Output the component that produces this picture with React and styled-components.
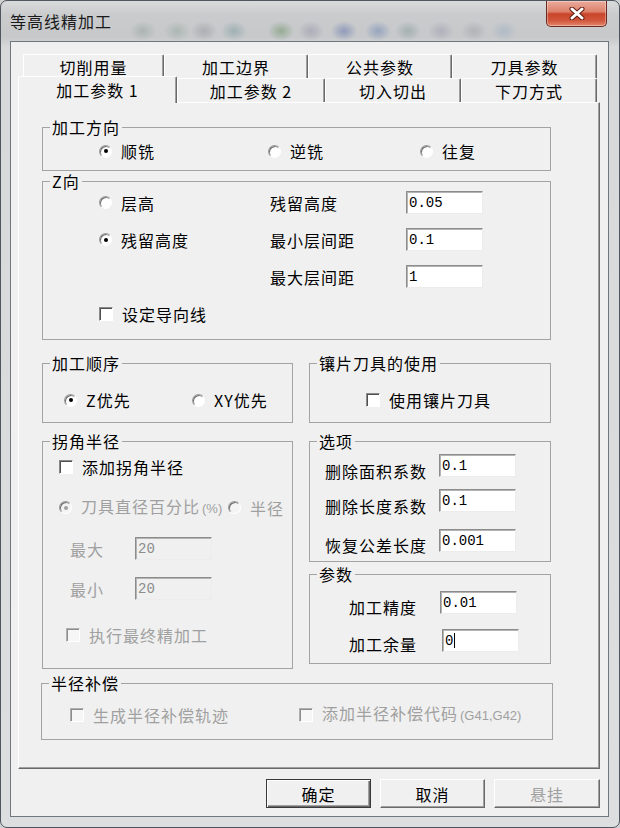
import React from 'react';
import styled, {createGlobalStyle, css} from 'styled-components';

const GlobalStyle = createGlobalStyle`
  html, body {
    margin: 0;
    padding: 0;
  }
  body {
    background: #d0d2d4;
    font-family: "Noto Sans CJK SC", "Noto Sans", sans-serif;
    font-size: 16px;
    color: #000;
  }
`;

// blurred desktop showing through the glass frame
const blob = (x, c) => `radial-gradient(ellipse 13px 10px at ${x}px 30px, ${c}, transparent)`;

const Window = styled.div`
  width: 620px;
  height: 828px;
  box-sizing: border-box;
  display: flex;
  flex-direction: column;
  border: 1px solid #4f565d;
  border-radius: 7px;
  overflow: hidden;
  background:
    ${[
      blob(142, 'rgba(120, 140, 130, 0.35)'),
      blob(176, 'rgba(110, 140, 120, 0.3)'),
      blob(203, 'rgba(120, 125, 135, 0.35)'),
      blob(233, 'rgba(100, 140, 145, 0.4)'),
      blob(280, 'rgba(90, 135, 80, 0.45)'),
      blob(310, 'rgba(125, 120, 150, 0.35)'),
      blob(343, 'rgba(80, 100, 165, 0.45)'),
      blob(377, 'rgba(90, 120, 175, 0.45)'),
      blob(407, 'rgba(100, 130, 130, 0.35)'),
      blob(440, 'rgba(125, 120, 150, 0.3)'),
      blob(473, 'rgba(130, 125, 140, 0.3)'),
      blob(503, 'rgba(130, 160, 190, 0.35)')
    ].join(', ')},
    linear-gradient(#d9dadb, #c9cbcd 14px, #c6c8ca 36px, #d6d8da 46px, #dcdee0);
`;

const TitleBar = styled.div`
  height: 40px;
  display: flex;
  align-items: flex-start;
  padding-left: 9px;
  flex: none;
`;

const Title = styled.div`
  margin-top: 11px;
  font-size: 16px;
  line-height: 18px;
  letter-spacing: 1px;
  color: #1a1a1a;
`;

const CloseButton = styled.div`
  width: 61px;
  height: 26px;
  margin-left: auto;
  margin-right: 12px;
  box-sizing: border-box;
  border: 1px solid #6b2a20;
  border-top: none;
  border-radius: 0 0 5px 5px;
  background: linear-gradient(#eaab9d, #dd826c 42%, #c9452b 52%, #d1573c 78%, #e3866d);
  box-shadow: inset 0 0 0 1px rgba(255, 255, 255, 0.35);
  display: flex;
  align-items: center;
  justify-content: center;
`;

const Client = styled.div`
  flex: 1;
  margin: 0 10px 10px 9px;
  border: 1px solid #6f777f;
  background: #f0f0f0;
  display: flex;
  flex-direction: column;
  padding: 12px 8px 8px 7px;
  min-height: 0;
`;

const TabRow = styled.div`
  display: flex;
  height: 24px;
  padding-left: ${p => p.$inset || 0}px;
  flex: none;
`;

const Tab = styled.div`
  box-sizing: border-box;
  width: ${p => p.$w}px;
  height: 24px;
  display: flex;
  align-items: center;
  justify-content: center;
  background: #f0f0f0;
  border-top: 1px solid #fff;
  border-left: 1px solid #fff;
  border-right: 1px solid #696969;
  box-shadow: inset -1px 0 #a0a0a0;
  border-radius: 2px 2px 0 0;
  font-size: 16px;
  letter-spacing: 1px;
  white-space: nowrap;
  ${p => p.$active && css`
    height: 27px;
    margin-top: -2px;
    margin-bottom: -1px;
    position: relative;
    z-index: 1;
  `}
`;

const Panel = styled.div`
  flex: 1;
  box-sizing: border-box;
  border-top: 1px solid #fff;
  border-left: 1px solid #fff;
  border-right: 1px solid #696969;
  border-bottom: 1px solid #696969;
  box-shadow: inset -1px -1px #a0a0a0;
  padding: 15px 0 0 23px;
`;

const Stack = styled.div`
  width: 509px;
  display: flex;
  flex-direction: column;
`;

// vertical padding lives on the fieldset, horizontal indent on Body
const Group = styled.fieldset`
  margin: ${p => p.$margin || '0'};
  min-width: 0;
  border: 1px solid #a3a3a3;
  padding: ${p => p.$pt}px 0 ${p => p.$pb}px 0;
`;

const Legend = styled.legend`
  padding: 0 2px;
  margin-left: 7px;
  font-size: 16px;
  line-height: 18px;
  letter-spacing: 1px;
`;

const Body = styled.div`
  padding-left: ${p => p.$indent}px;
  display: flex;
  flex-direction: column;
`;

const Columns = styled.div`
  display: grid;
  grid-template-columns: ${p => p.$cols};
  align-items: center;
`;

const ZGrid = styled.div`
  display: grid;
  grid-template-columns: 171px 136px 77px;
  grid-auto-rows: 23px;
  row-gap: 14px;
  align-items: center;
`;

const TwoUp = styled.div`
  display: grid;
  grid-template-columns: 251px 242px;
  column-gap: 16px;
  margin-top: ${p => p.$mt}px;
`;

const RightStack = styled.div`
  display: flex;
  flex-direction: column;
`;

const Line = styled.div`
  display: flex;
  align-items: center;
  margin-top: ${p => p.$mt || 0}px;
  padding-left: ${p => p.$indent || 0}px;
`;

const OptRow = styled.div`
  display: flex;
  align-items: flex-end;
  margin-top: ${p => p.$mt || 0}px;
`;

const FieldLabel = styled.span`
  width: ${p => p.$w}px;
  flex: none;
  line-height: 18px;
  letter-spacing: 1px;
  white-space: nowrap;
  color: ${p => (p.$disabled ? '#a0a0a0' : '#000')};
  margin-bottom: ${p => p.$drop || 0}px;
`;

const OptionBox = styled.label`
  display: flex;
  align-items: center;
  gap: 9px;
  line-height: 18px;
  letter-spacing: 1px;
  white-space: nowrap;
  width: ${p => (p.$w ? `${p.$w}px` : 'auto')};
  flex: none;
  color: ${p => (p.$disabled ? '#a0a0a0' : '#000')};
`;

const RadioMark = styled.span`
  width: 13px;
  height: 13px;
  box-sizing: border-box;
  flex: none;
  border-radius: 50%;
  border: 1px solid;
  border-color: #9a9a9a #fff #fff #9a9a9a;
  box-shadow: inset 1px 1px 0 #707070;
  background: ${p => (p.$disabled ? '#f4f4f4' : '#fff')};
  display: flex;
  align-items: center;
  justify-content: center;
  &::after {
    content: '';
    display: ${p => (p.$checked ? 'block' : 'none')};
    width: 4px;
    height: 4px;
    border-radius: 50%;
    background: ${p => (p.$disabled ? '#a0a0a0' : '#000')};
  }
`;

const CheckMark = styled.span`
  width: 14px;
  height: 14px;
  box-sizing: border-box;
  flex: none;
  border: 1px solid;
  border-color: #8a8a8a #fff #fff #8a8a8a;
  box-shadow: inset 1px 1px 0 #505050;
  background: ${p => (p.$disabled ? '#f6f6f6' : '#fff')};
  ${p => p.$disabled && css`
    border-color: #b0b0b0 #fff #fff #b0b0b0;
    box-shadow: inset 1px 1px 0 #8c8c8c;
  `}
`;

const Small = styled.span`
  font-family: "Liberation Sans", sans-serif;
  font-size: 13px;
  letter-spacing: 0;
  margin-left: 2px;
`;

const Field = styled.div`
  box-sizing: border-box;
  width: 77px;
  height: 23px;
  flex: none;
  display: flex;
  align-items: center;
  padding-left: 2px;
  background: ${p => (p.$disabled ? '#f0f0f0' : '#fff')};
  border: 1px solid;
  border-color: #8c8c8c #ececec #ececec #8c8c8c;
  box-shadow: inset 1px 1px 0 #b4b4b4;
  font-family: "Liberation Mono", monospace;
  font-size: 14px;
  color: ${p => (p.$disabled ? '#8c8c8c' : '#000')};
`;

const Caret = styled.span`
  width: 1px;
  height: 15px;
  background: #000;
  margin-left: 1px;
`;

const ButtonBar = styled.div`
  display: flex;
  justify-content: flex-end;
  gap: 9px;
  margin-top: 10px;
  flex: none;
`;

const Button = styled.div`
  box-sizing: border-box;
  width: ${p => p.$w || 105}px;
  height: 29px;
  display: flex;
  align-items: center;
  justify-content: center;
  background: #f0f0f0;
  border: 1px solid;
  border-color: #fff #696969 #696969 #fff;
  box-shadow: inset -1px -1px #a0a0a0;
  font-size: 16px;
  letter-spacing: 1px;
  color: ${p => (p.$disabled ? '#a0a0a0' : '#000')};
  ${p => p.$default && css`
    border: 1px solid #3a3a3a;
    box-shadow: inset 1px 1px #fff, inset -1px -1px #696969, inset -2px -2px #a0a0a0;
  `}
`;

const Option = ({type = 'radio', checked, disabled, width, children}) =>
  <OptionBox $w={width} $disabled={disabled}>
    {type === 'radio'
      ? <RadioMark $checked={checked} $disabled={disabled} />
      : <CheckMark $disabled={disabled} />}
    <span>{children}</span>
  </OptionBox>;

const CloseGlyph = () =>
  <svg width="16" height="13" viewBox="0 0 16 13">
    <path d="M3 2 L13 11 M13 2 L3 11" stroke="#5e1c12" strokeWidth="5" strokeLinecap="round" />
    <path d="M3 2 L13 11 M13 2 L3 11" stroke="#fff" strokeWidth="3" strokeLinecap="round" />
  </svg>;

const backTabs = [
  {label: '切削用量', w: 141},
  {label: '加工边界', w: 144},
  {label: '公共参数', w: 144},
  {label: '刀具参数', w: 145}
];

const frontTabs = [
  {label: '加工参数 1', w: 159, active: true},
  {label: '加工参数 2', w: 148},
  {label: '切入切出', w: 136},
  {label: '下刀方式', w: 136}
];

export default function App() {
  return (
    <>
      <GlobalStyle />
      <Window>
        <TitleBar>
          <Title>等高线精加工</Title>
          <CloseButton><CloseGlyph /></CloseButton>
        </TitleBar>
        <Client>
          <TabRow $inset={5}>
            {backTabs.map(t => <Tab key={t.label} $w={t.w}>{t.label}</Tab>)}
          </TabRow>
          <TabRow>
            {frontTabs.map(t => <Tab key={t.label} $w={t.w} $active={t.active}>{t.label}</Tab>)}
          </TabRow>
          <Panel>
            <Stack>
              <Group $pt={6} $pb={10}>
                <Legend>加工方向</Legend>
                <Body $indent={56}>
                  <Columns $cols="169px 152px auto">
                    <Option checked>顺铣</Option>
                    <Option>逆铣</Option>
                    <Option>往复</Option>
                  </Columns>
                </Body>
              </Group>

              <Group $pt={1} $pb={14} $margin="1px 0 0">
                <Legend>Z向</Legend>
                <Body $indent={56}>
                  <ZGrid>
                    <Option>层高</Option>
                    <FieldLabel>残留高度</FieldLabel>
                    <Field>0.05</Field>
                    <Option checked>残留高度</Option>
                    <FieldLabel>最小层间距</FieldLabel>
                    <Field>0.1</Field>
                    <span />
                    <FieldLabel>最大层间距</FieldLabel>
                    <Field>1</Field>
                    <Option type="check">设定导向线</Option>
                  </ZGrid>
                </Body>
              </Group>

              <TwoUp $mt={14}>
                <Group $pt={19} $pb={13}>
                  <Legend>加工顺序</Legend>
                  <Body $indent={21}>
                    <Columns $cols="128px auto">
                      <Option checked>Z优先</Option>
                      <Option>XY优先</Option>
                    </Columns>
                  </Body>
                </Group>
                <Group $pt={19} $pb={13}>
                  <Legend>镶片刀具的使用</Legend>
                  <Body $indent={56}>
                    <Option type="check">使用镶片刀具</Option>
                  </Body>
                </Group>
              </TwoUp>

              <TwoUp $mt={9}>
                <Group $pt={8} $pb={24}>
                  <Legend>拐角半径</Legend>
                  <Body $indent={16}>
                    <Line>
                      <Option type="check">添加拐角半径</Option>
                    </Line>
                    <Line $mt={21}>
                      <Option checked disabled width={169}>刀具直径百分比<Small>(%)</Small></Option>
                      <Option disabled>半径</Option>
                    </Line>
                    <Line $mt={19} $indent={11}>
                      <FieldLabel $w={65} $disabled>最大</FieldLabel>
                      <Field $disabled>20</Field>
                    </Line>
                    <Line $mt={17} $indent={11}>
                      <FieldLabel $w={65} $disabled>最小</FieldLabel>
                      <Field $disabled>20</Field>
                    </Line>
                    <Line $mt={26} $indent={7}>
                      <Option type="check" disabled>执行最终精加工</Option>
                    </Line>
                  </Body>
                </Group>

                <RightStack>
                  <Group $pt={4} $pb={9}>
                    <Legend>选项</Legend>
                    <Body $indent={15}>
                      <OptRow>
                        <FieldLabel $w={114} $drop={-3}>删除面积系数</FieldLabel>
                        <Field>0.1</Field>
                      </OptRow>
                      <OptRow $mt={12}>
                        <FieldLabel $w={114} $drop={-3}>删除长度系数</FieldLabel>
                        <Field>0.1</Field>
                      </OptRow>
                      <OptRow $mt={17}>
                        <FieldLabel $w={114} $drop={-2}>恢复公差长度</FieldLabel>
                        <Field>0.001</Field>
                      </OptRow>
                    </Body>
                  </Group>
                  <Group $pt={8} $pb={11} $margin="3px 0 0">
                    <Legend>参数</Legend>
                    <Body $indent={39}>
                      <OptRow>
                        <FieldLabel $w={91} $drop={-2}>加工精度</FieldLabel>
                        <Field>0.01</Field>
                      </OptRow>
                      <OptRow $mt={15}>
                        <FieldLabel $w={93} $drop={-1}>加工余量</FieldLabel>
                        <Field>0<Caret /></Field>
                      </OptRow>
                    </Body>
                  </Group>
                </RightStack>
              </TwoUp>

              <Group $pt={12} $pb={14} $margin="5px -2px 0 -1px">
                <Legend>半径补偿</Legend>
                <Body $indent={28}>
                  <Columns $cols="229px auto">
                    <Option type="check" disabled>生成半径补偿轨迹</Option>
                    <Option type="check" disabled>添加半径补偿代码<Small>(G41,G42)</Small></Option>
                  </Columns>
                </Body>
              </Group>
            </Stack>
          </Panel>
          <ButtonBar>
            <Button $default>确定</Button>
            <Button>取消</Button>
            <Button $w={106} $disabled>悬挂</Button>
          </ButtonBar>
        </Client>
      </Window>
    </>
  );
}
